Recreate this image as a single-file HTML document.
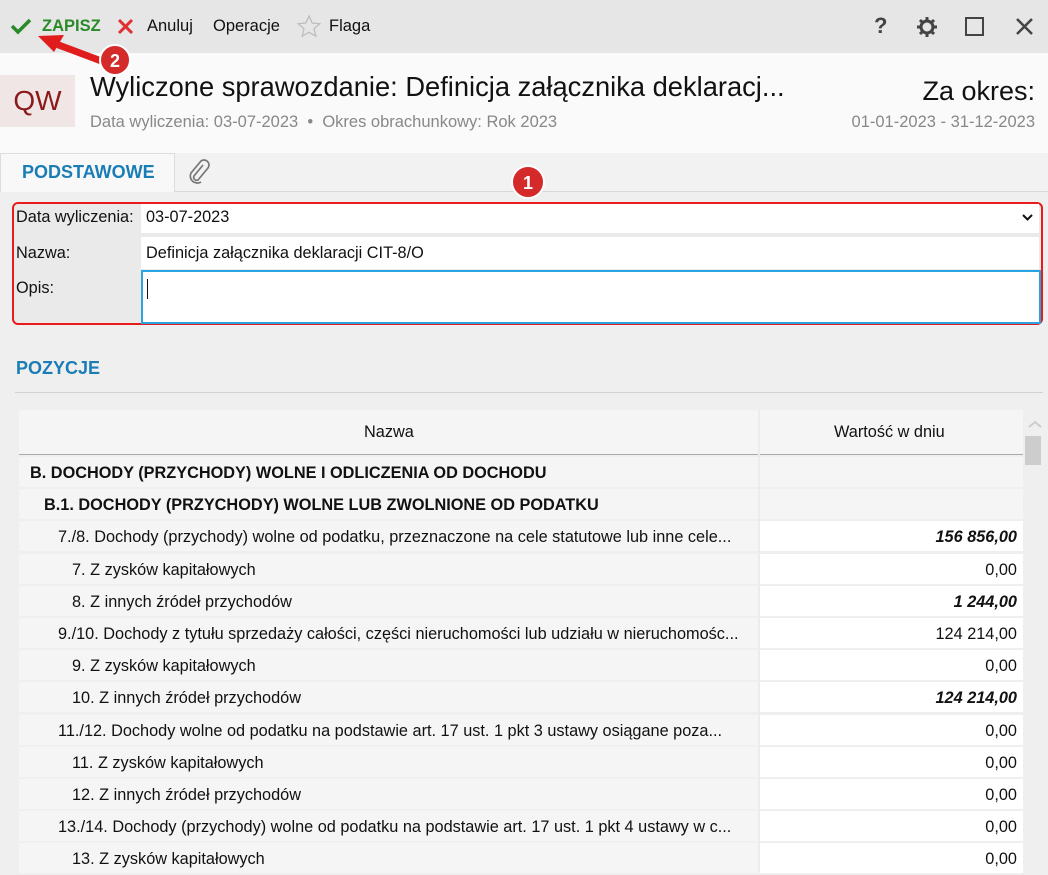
<!DOCTYPE html>
<html><head><meta charset="utf-8"><style>
*{box-sizing:border-box;margin:0;padding:0}
body{width:1048px;height:872px;overflow:hidden;background:#efefef;font-family:"Liberation Sans","DejaVu Sans",sans-serif;color:#111;position:relative}
.abs{position:absolute}
.tb{left:0;top:0;width:1048px;height:53px;background:#e6e6e6}
.tb span{position:absolute;top:17px;font-size:16.5px}
.hdr{left:0;top:53px;width:1048px;height:100px;background:#fafafa}
.tabs{left:0;top:153px;width:1048px;height:39px;background:#f2f2f2;border-bottom:1px solid #d8d8d8}
.row{position:absolute;left:19px;width:1004px;height:30px}
.row .n{position:absolute;left:0;top:0;width:739px;height:30px;background:#f5f5f5;font-size:16.3px;line-height:32px;white-space:nowrap;overflow:hidden}
.row .v{position:absolute;left:741px;top:0;width:263px;height:30px;background:#fff;font-size:16.3px;line-height:32px;text-align:right;padding-right:6px}
.b .n{font-weight:bold}
.b .v{background:#f5f5f5}
.bi{font-weight:bold;font-style:italic}
</style></head><body>
<div class="abs tb">
<svg class="abs" style="left:10px;top:17px" width="22" height="18" viewBox="0 0 22 18"><path d="M2 9l6 6L20 3" stroke="#2a8a2a" stroke-width="3.5" fill="none"/></svg>
<span style="left:42px;color:#2a8a2a;font-weight:bold">ZAPISZ</span>
<svg class="abs" style="left:117px;top:18px" width="17" height="17"><path d="M2 2l13 13M15 2L2 15" stroke="#e03030" stroke-width="3"/></svg>
<span style="left:147px">Anuluj</span>
<span style="left:213px">Operacje</span>
<svg class="abs" style="left:297px;top:15px" width="24" height="23" viewBox="0 0 24 23"><path d="M12 1l3.2 7 7.6.7-5.8 5 1.8 7.5L12 17.3 5.2 21.2 7 13.7 1.2 8.7 8.8 8z" fill="none" stroke="#bbb" stroke-width="1.2"/></svg>
<span style="left:329px">Flaga</span>
<span style="left:874px;font-size:22px;top:13px;color:#444;font-weight:bold">?</span>
<svg class="abs" style="left:916px;top:16px" width="22" height="22" viewBox="0 0 22 22"><circle cx="11" cy="11" r="6" fill="none" stroke="#444" stroke-width="3"/><path d="M11 1v5M11 16v5M1 11h5M16 11h5M4 4l3.5 3.5M14.5 14.5L18 18M18 4l-3.5 3.5M7.5 14.5L4 18" stroke="#444" stroke-width="3"/></svg>
<div class="abs" style="left:965px;top:17px;width:19px;height:19px;border:2.5px solid #444"></div>
<svg class="abs" style="left:1015px;top:17px" width="19" height="19"><path d="M2 2l15 15M17 2L2 17" stroke="#444" stroke-width="2.5"/></svg>
</div>
<div class="abs hdr">
<div class="abs" style="left:0;top:22px;width:75px;height:52px;background:#f1e6e6;color:#8b1a1a;font-size:28px;line-height:52px;text-align:center">QW</div>
<div class="abs" style="left:90px;top:18px;font-size:27.3px;white-space:nowrap">Wyliczone sprawozdanie: Definicja załącznika deklaracj...</div>
<div class="abs" style="left:90px;top:60px;font-size:16.5px;color:#888">Data wyliczenia: 03-07-2023 &nbsp;•&nbsp; Okres obrachunkowy: Rok 2023</div>
<div class="abs" style="right:13px;top:23px;font-size:27px">Za okres:</div>
<div class="abs" style="right:13px;top:60px;font-size:16.5px;color:#888">01-01-2023 - 31-12-2023</div>
</div>
<svg class="abs" style="left:0;top:0;z-index:3" width="140" height="80"><path d="M104 62L56 44" stroke="#e01c1c" stroke-width="7"/><path d="M38 36l26-1-10 17z" fill="#e01c1c"/><circle cx="115" cy="60" r="15" fill="#d42a2a" stroke="#fff" stroke-width="2"/><text x="115" y="67" text-anchor="middle" fill="#fff" font-size="18" font-weight="bold" font-family="Liberation Sans">2</text></svg>
<div class="abs tabs">
<div class="abs" style="left:0;top:0;width:175px;height:39px;background:#f8f8f8;border:1px solid #ddd;border-bottom:none;color:#1a7db5;font-weight:bold;font-size:18px;padding:8px 0 0 21px">PODSTAWOWE</div>
<svg class="abs" style="left:186px;top:6px" width="26" height="26" viewBox="0 0 26 26"><path d="M17 6L8 17a3 3 0 0 0 4 4l10-12a5 5 0 0 0-7-7L5 14a7 7 0 0 0 10 9" fill="none" stroke="#777" stroke-width="1.7"/></svg>
</div>
<svg class="abs" style="left:509px;top:164px" width="38" height="36"><circle cx="19" cy="18" r="16" fill="#d42a2a" stroke="#fff" stroke-width="2"/><text x="19" y="25" text-anchor="middle" fill="#fff" font-size="18" font-weight="bold" font-family="Liberation Sans">1</text></svg>
<div class="abs" style="left:12px;top:202px;width:1031px;height:123px;border:2px solid #e81c1c;border-radius:6px;background:#eaeaea"></div>
<div class="abs" style="left:16px;top:208px;font-size:16.3px">Data wyliczenia:</div>
<div class="abs" style="left:141px;top:204px;width:898px;height:29px;background:#fff;font-size:16.3px;padding:4px 5px">03-07-2023<svg style="position:absolute;right:6px;top:10px" width="11" height="8"><path d="M1 1l4.5 4.5L10 1" stroke="#111" stroke-width="2" fill="none"/></svg></div>
<div class="abs" style="left:16px;top:244px;font-size:16.3px">Nazwa:</div>
<div class="abs" style="left:141px;top:237px;width:898px;height:32px;background:#fff;font-size:16.3px;padding:7px 5px">Definicja załącznika deklaracji CIT-8/O</div>
<div class="abs" style="left:16px;top:279px;font-size:16.3px">Opis:</div>
<div class="abs" style="left:141px;top:270px;width:900px;height:54px;background:#fff;border:2px solid #2aa4e0"><div style="position:absolute;left:4px;top:7px;width:1px;height:20px;background:#111"></div></div>
<div class="abs" style="left:16px;top:358px;font-size:18px;font-weight:bold;color:#1a7db5">POZYCJE</div>
<div class="abs" style="left:15px;top:392px;width:1028px;height:1px;background:#d2d2d2"></div>
<div class="abs" style="left:19px;top:410px;width:1004px;height:45px;background:#f5f5f5;border-bottom:1px solid #aaa"></div>
<div class="abs" style="left:758px;top:410px;width:2px;height:462px;background:#ececec;z-index:2"></div>
<div class="abs" style="left:364px;top:423px;font-size:16.3px">Nazwa</div>
<div class="abs" style="left:834px;top:423px;font-size:16.3px">Wartość w dniu</div>
<svg class="abs" style="left:1027px;top:419px" width="16" height="10"><path d="M2 8l6-5 6 5" stroke="#ccc" stroke-width="2" fill="none"/></svg>
<div class="abs" style="left:1025px;top:436px;width:16px;height:29px;background:#cdcdcd"></div>

<div class="row b" style="top:457px"><div class="n" style="padding-left:11px">B. DOCHODY (PRZYCHODY) WOLNE I ODLICZENIA OD DOCHODU</div><div class="v"></div></div>
<div class="row b" style="top:489px"><div class="n" style="padding-left:25px">B.1. DOCHODY (PRZYCHODY) WOLNE LUB ZWOLNIONE OD PODATKU</div><div class="v"></div></div>
<div class="row" style="top:521px"><div class="n" style="padding-left:39px">7./8. Dochody (przychody) wolne od podatku, przeznaczone na cele statutowe lub inne cele...</div><div class="v bi">156 856,00</div></div>
<div class="row" style="top:554px"><div class="n" style="padding-left:53px">7. Z zysków kapitałowych</div><div class="v">0,00</div></div>
<div class="row" style="top:586px"><div class="n" style="padding-left:53px">8. Z innych źródeł przychodów</div><div class="v bi">1 244,00</div></div>
<div class="row" style="top:618px"><div class="n" style="padding-left:39px">9./10. Dochody z tytułu sprzedaży całości, części nieruchomości lub udziału w nieruchomośc...</div><div class="v">124 214,00</div></div>
<div class="row" style="top:650px"><div class="n" style="padding-left:53px">9. Z zysków kapitałowych</div><div class="v">0,00</div></div>
<div class="row" style="top:682px"><div class="n" style="padding-left:53px">10. Z innych źródeł przychodów</div><div class="v bi">124 214,00</div></div>
<div class="row" style="top:715px"><div class="n" style="padding-left:39px">11./12. Dochody wolne od podatku na podstawie art. 17 ust. 1 pkt 3 ustawy osiągane poza...</div><div class="v">0,00</div></div>
<div class="row" style="top:747px"><div class="n" style="padding-left:53px">11. Z zysków kapitałowych</div><div class="v">0,00</div></div>
<div class="row" style="top:779px"><div class="n" style="padding-left:53px">12. Z innych źródeł przychodów</div><div class="v">0,00</div></div>
<div class="row" style="top:811px"><div class="n" style="padding-left:39px">13./14. Dochody (przychody) wolne od podatku na podstawie art. 17 ust. 1 pkt 4 ustawy w c...</div><div class="v">0,00</div></div>
<div class="row" style="top:843px"><div class="n" style="padding-left:53px">13. Z zysków kapitałowych</div><div class="v">0,00</div></div>
</body></html>
